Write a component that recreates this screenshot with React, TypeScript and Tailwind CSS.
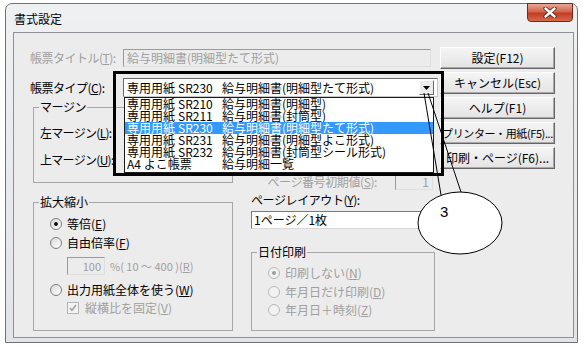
import React from "react";

const U = ({ c }: { c: string }) => (
  <span className="underline decoration-1 underline-offset-[1px]">{c}</span>
);

function Radio({ checked = false, disabled = false }: { checked?: boolean; disabled?: boolean }) {
  return (
    <span
      className={`w-[12px] h-[12px] rounded-full border flex items-center justify-center shrink-0 ${
        disabled ? "border-[#b9b9b9] bg-[#f1f1f1]" : "border-[#7e7e7e] bg-[linear-gradient(135deg,#d9d9d9,#ffffff)]"
      }`}
    >
      {checked && (
        <span className={`w-[4px] h-[4px] rounded-full ${disabled ? "bg-[#9c9c9c]" : "bg-[#111111]"}`} />
      )}
    </span>
  );
}

function Check() {
  return (
    <span className="w-[12px] h-[12px] border border-[#b5b5b5] bg-[#f2f2f2] flex items-center justify-center shrink-0">
      <svg width="8" height="8" viewBox="0 0 8 8">
        <path d="M1 4 L3 6.3 L7 1" stroke="#a2a2a2" strokeWidth="1.6" fill="none" />
      </svg>
    </span>
  );
}

function Btn({ children, tight = false }: { children: React.ReactNode; tight?: boolean }) {
  return (
    <div
      className={`w-[115px] h-[22px] flex items-center justify-center overflow-hidden whitespace-nowrap leading-[14px] text-black bg-[linear-gradient(#f5f5f5,#e3e3e3)] border border-t-[#fdfdfd] border-l-[#fdfdfd] border-r-[#666666] border-b-[#666666] shadow-[inset_-1px_-1px_0_#a9a9a9] ${
        tight ? "text-[11px] tracking-[-0.4px]" : "text-[12px]"
      }`}
    >
      <span className="shrink-0">{children}</span>
    </div>
  );
}

const listRows: [string, string, string][] = [
  ["専用用紙", "SR210", "給与明細書(明細型)"],
  ["専用用紙", "SR211", "給与明細書(封筒型)"],
  ["専用用紙", "SR230", "給与明細書(明細型たて形式)"],
  ["専用用紙", "SR231", "給与明細書(明細型よこ形式)"],
  ["専用用紙", "SR232", "給与明細書(封筒型シール形式)"],
  ["A4 よこ帳票", "", "給与明細一覧"],
];

function RowText({ a, b, c }: { a: string; b: string; c: string }) {
  return (
    <span className="flex whitespace-nowrap">
      <span className="w-[95px] flex shrink-0">
        {b ? (
          <>
            <span className="w-[51px] shrink-0">{a}</span>
            <span>{b}</span>
          </>
        ) : (
          <span>{a}</span>
        )}
      </span>
      <span>{c}</span>
    </span>
  );
}

export default function App() {
  return (
    <div className="relative w-[587px] h-[357px] bg-white overflow-hidden font-['Noto_Sans_CJK_JP','Noto_Sans',sans-serif] text-[12px] leading-[14px] text-black">
      {/* window */}
      <div className="ml-[5px] mt-[3px] w-[573px] h-[340px] border border-[#6f7378] rounded-t-[7px] bg-[linear-gradient(#eef0f2,#e2e5e8)] flex flex-col">
        {/* title bar */}
        <div className="h-[28px] flex items-start shrink-0">
          <span className="pl-[8px] pt-[8px] text-[12px] leading-[14px] text-black">書式設定</span>
          <div className="ml-auto mr-[4px] -mt-[1px] w-[46px] h-[19px] rounded-b-[4px] border border-[#6e2a1f] bg-[linear-gradient(#e9a796_0%,#d2654c_45%,#c13d24_55%,#d46a4d_100%)] flex items-center justify-center">
            <svg width="14" height="11" viewBox="0 0 14 11">
              <path d="M2.5 1.5 L11.5 9.5 M11.5 1.5 L2.5 9.5" stroke="#5b2418" strokeWidth="4.2" strokeLinecap="round" />
              <path d="M2.5 1.5 L11.5 9.5 M11.5 1.5 L2.5 9.5" stroke="#ffffff" strokeWidth="2.4" strokeLinecap="round" />
            </svg>
          </div>
        </div>

        {/* client area */}
        <div className="ml-[7px] mr-[3px] h-[306px] border border-[#8d9096] bg-[#ececec] flex pt-[14px] pl-[16px]">
          {/* left part */}
          <div className="w-[410px] flex flex-col">
            <div className="mt-[2px] h-[18px] flex items-center">
              <span className="w-[93px] shrink-0 text-[#a0a0a0] whitespace-nowrap tracking-[-0.5px]">
                帳票タイトル(<U c="T" />):
              </span>
              <div className="w-[308px] h-[18px] border border-t-[#9a9a9a] border-l-[#9a9a9a] border-r-[#dedede] border-b-[#dedede] bg-[#ececec] flex items-center pl-[3px] text-[#a0a0a0] whitespace-nowrap">
                給与明細書(明細型たて形式)
              </div>
            </div>

            <div className="mt-[11px] h-[19px] flex items-center">
              <span className="w-[93px] shrink-0 whitespace-nowrap tracking-[-0.5px]">
                帳票タイプ(<U c="C" />):
              </span>
              <div className="w-[315px] h-[19px] bg-white border border-t-[#6a6a6a] border-l-[#6a6a6a] border-r-[#c8c8c8] border-b-[#c8c8c8] flex items-center pl-[3px]">
                <RowText a="専用用紙" b="SR230" c="給与明細書(明細型たて形式)" />
                <div className="ml-auto mr-[3px] w-[15px] h-[15px] bg-[#ececec] border border-t-[#fdfdfd] border-l-[#fdfdfd] border-r-[#6a6a6a] border-b-[#6a6a6a] flex items-center justify-center">
                  <svg width="7" height="4" viewBox="0 0 7 4">
                    <path d="M0 0 H7 L3.5 4 Z" fill="#000" />
                  </svg>
                </div>
              </div>
            </div>

            {/* lower columns */}
            <div className="mt-[3px] ml-[3px] flex">
              <div className="w-[200px] flex flex-col">
                <fieldset className="w-[200px] h-[83px] border border-[#a6a6a6]">
                  <legend className="ml-[5px] px-[1px] leading-[14px] tracking-[-0.4px]">マージン</legend>
                  <div className="pl-[6px] pt-[12px] flex flex-col gap-[13px]">
                    <div className="h-[14px] flex items-center whitespace-nowrap">
                      <span className="w-[90px] tracking-[-0.7px]">
                        左マージン(<U c="L" />):
                      </span>
                      <div className="w-[40px] h-[18px] bg-white border border-[#8a8a8a]" />
                    </div>
                    <div className="h-[14px] flex items-center whitespace-nowrap">
                      <span className="w-[90px] tracking-[-0.7px]">
                        上マージン(<U c="U" />):
                      </span>
                      <div className="w-[40px] h-[18px] bg-white border border-[#8a8a8a]" />
                    </div>
                  </div>
                </fieldset>

                <fieldset className="mt-[12px] w-[200px] h-[136px] border border-[#a6a6a6]">
                  <legend className="ml-[5px] px-[1px] leading-[14px]">拡大縮小</legend>
                  <div className="pl-[16px] pt-[5px] flex flex-col">
                    <div className="h-[19px] flex items-center gap-[5px] whitespace-nowrap">
                      <Radio checked />
                      <span>
                        等倍(<U c="E" />)
                      </span>
                    </div>
                    <div className="h-[19px] flex items-center gap-[5px] whitespace-nowrap">
                      <Radio />
                      <span>
                        自由倍率(<U c="F" />)
                      </span>
                    </div>
                    <div className="mt-[5px] h-[18px] pl-[17px] flex items-center whitespace-nowrap">
                      <div className="w-[38px] h-[18px] border border-t-[#9a9a9a] border-l-[#9a9a9a] border-r-[#dedede] border-b-[#dedede] bg-[#ececec] flex items-center justify-end pr-[3px] text-[#a0a0a0] text-[11px]">
                        100
                      </div>
                      <span className="ml-[5px] text-[#a0a0a0] text-[11px]">
                        %( 10 ～ 400 )(<U c="R" />)
                      </span>
                    </div>
                    <div className="mt-[5px] h-[19px] flex items-center gap-[5px] whitespace-nowrap">
                      <Radio />
                      <span>
                        出力用紙全体を使う(<U c="W" />)
                      </span>
                    </div>
                    <div className="h-[17px] pl-[17px] flex items-center gap-[6px] whitespace-nowrap text-[#a0a0a0]">
                      <Check />
                      <span>
                        縦横比を固定(<U c="V" />)
                      </span>
                    </div>
                  </div>
                </fieldset>
              </div>

              <div className="ml-[18px] w-[184px] flex flex-col pt-[73px]">
                <div className="h-[17px] flex items-center whitespace-nowrap">
                  <span className="w-[126px] text-right text-[#a0a0a0] tracking-[-0.4px]">
                    ページ番号初期値(<U c="S" />):
                  </span>
                  <div className="ml-[18px] w-[38px] h-[17px] border border-t-[#9a9a9a] border-l-[#9a9a9a] border-r-[#dedede] border-b-[#dedede] bg-[#ececec] flex items-center justify-end pr-[3px] text-[#a0a0a0]">
                    1
                  </div>
                </div>
                <div className="mt-[3px] h-[14px] flex items-center whitespace-nowrap tracking-[-0.4px]">
                  ページレイアウト(<U c="Y" />):
                </div>
                <div className="mt-[4px] w-[172px] h-[18px] bg-white border border-t-[#7a7a7a] border-l-[#7a7a7a] border-r-[#d8d8d8] border-b-[#d8d8d8] flex items-center pl-[2px] whitespace-nowrap">
                  1ページ／1枚
                </div>
                <fieldset className="mt-[16px] w-[184px] h-[86px] border border-[#a6a6a6]">
                  <legend className="ml-[5px] px-[1px] leading-[14px]">日付印刷</legend>
                  <div className="pl-[16px] pt-[5px] flex flex-col text-[#a0a0a0]">
                    <div className="h-[18px] flex items-center gap-[5px] whitespace-nowrap">
                      <Radio checked disabled />
                      <span>
                        印刷しない(<U c="N" />)
                      </span>
                    </div>
                    <div className="h-[19px] flex items-center gap-[5px] whitespace-nowrap">
                      <Radio disabled />
                      <span>
                        年月日だけ印刷(<U c="D" />)
                      </span>
                    </div>
                    <div className="h-[18px] flex items-center gap-[5px] whitespace-nowrap">
                      <Radio disabled />
                      <span>
                        年月日＋時刻(<U c="Z" />)
                      </span>
                    </div>
                  </div>
                </fieldset>
              </div>
            </div>
          </div>

          {/* buttons */}
          <div className="flex flex-col gap-[3px]">
            <Btn>設定(F12)</Btn>
            <Btn>キャンセル(Esc)</Btn>
            <Btn>ヘルプ(F1)</Btn>
            <Btn tight>プリンター・用紙(F5)...</Btn>
            <Btn>印刷・ページ(F6)...</Btn>
          </div>
        </div>
      </div>

      {/* dropdown list (open) */}
      <div className="absolute left-[124px] top-[97px] w-[310px] h-[76px] bg-white border border-[#1a1a1a] flex flex-col">
        {listRows.map(([a, b, c], i) => (
          <div
            key={i}
            className={`h-[12px] leading-[12px] pl-[2px] flex items-center ${
              i === 2 ? "bg-[#3399ff] text-white" : "text-black"
            }`}
          >
            <RowText a={a} b={b} c={c} />
          </div>
        ))}
      </div>

      {/* annotation frame */}
      <div className="absolute left-[113px] top-[71px] w-[331px] h-[105px] border-[3px] border-black" />

      {/* callout */}
      <svg className="absolute left-0 top-0 pointer-events-none" width="587" height="357" viewBox="0 0 587 357">
        <ellipse cx="460" cy="223" rx="42" ry="31" fill="#ffffff" stroke="#000" strokeWidth="1" />
        <line x1="424" y1="93" x2="441" y2="195" stroke="#000" strokeWidth="1" />
        <line x1="428" y1="93" x2="461" y2="192" stroke="#000" strokeWidth="1" />
      </svg>
      <span className="absolute left-[440px] top-[203px] text-[15px] leading-[18px] font-['Liberation_Sans',sans-serif] text-black">
        3
      </span>
    </div>
  );
}
